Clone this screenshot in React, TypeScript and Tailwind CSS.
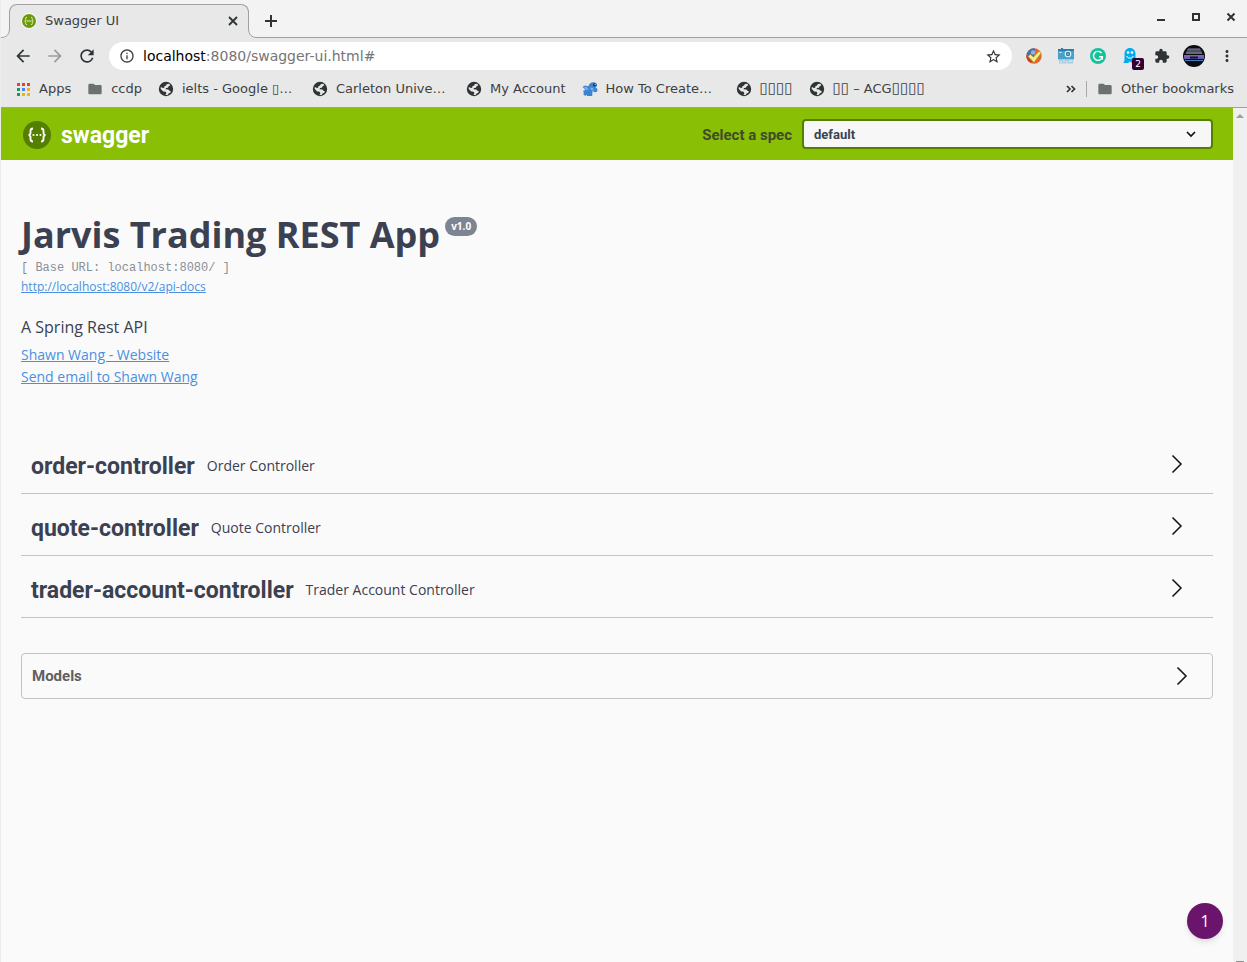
import React from "react";
import { MdArrowBack, MdArrowForward, MdRefresh, MdInfoOutline, MdStarBorder, MdExtension, MdMoreVert, MdFolder } from "react-icons/md";

const chromeFont = "font-['DejaVu_Sans',sans-serif]";
const titleFont = "font-[Roboto,sans-serif] font-bold";

function Globe() {
  return (
    <svg className="size-4 shrink-0" viewBox="0 0 16 16">
      <circle cx="8" cy="8" r="7.2" fill="#2f3437" />
      <path d="M8.600 3.200 11.300 2.800l1 1.400-1.700 1-.7 1.500-2 .4-.3 1.200 2.700.2 1.200 1.200 1.300.5-.5 1.600-1.700.7-1 1.500H7.400l1-1.700-.7-1.500-2.500-.4L2.600 7.800l.3-1.700 2 1 1.300-.3.2-1.600 1.800-.6z" fill="#e8e8e8" />
    </svg>
  );
}

function Folder() {
  return <MdFolder className="size-4 shrink-0 text-[#6b7171]" />;
}

function AppsGrid() {
  const colors = ["#db4437", "#db4437", "#db4437", "#0f9d58", "#4285f4", "#f4b400", "#0f9d58", "#f4b400", "#f4b400"];
  return (
    <svg className="size-4 shrink-0" viewBox="0 0 16 16">
      {colors.map((c, i) => (
        <rect key={i} x={2 + (i % 3) * 5} y={2 + Math.floor(i / 3) * 5} width="3" height="3" fill={c} />
      ))}
    </svg>
  );
}

function BirdIcon() {
  return (
    <svg className="size-4 shrink-0" viewBox="0 0 16 16">
      <path d="M.5 6 3 4.500l3.500.8C7 2.500 9 1.200 11.500 1.200c2 0 3.500 1 3.500 2.800 0 1.200-.7 2-1.700 2.500 1.400.3 2.200 1.300 2.200 2.500 0 1.500-1.200 2.300-2.700 2.200L10.500 10l-.3 5H5l-.3-1.500-1 1.300L1.500 14l.3-2.500L1 10l2.500-1.200z" fill="#3c83d3" />
      <path d="m2 6 2.500-.3L6.500 8l-2 1.500zM8 6.500l3 .5 1 2.500-3-.5z" fill="#79b0ec" />
      <circle cx="12.700" cy="3.700" r="1.700" fill="#163a72" />
      <circle cx="13.200" cy="3.200" r=".6" fill="#fff" />
    </svg>
  );
}

function Boxes({ children }: { children: string }) {
  return <span className="text-[15px] leading-4">{children}</span>;
}

type Mark = { id: string; label: React.ReactNode; icon: React.ReactNode; clipped?: boolean };
const marks: Mark[] = [
  { id: "apps", label: "Apps", icon: <AppsGrid /> },
  { id: "ccdp", label: "ccdp", icon: <Folder /> },
  { id: "ielts", label: "ielts - Google ▯…", icon: <Globe />, clipped: true },
  { id: "carleton", label: "Carleton Unive…", icon: <Globe />, clipped: true },
  { id: "account", label: "My Account", icon: <Globe /> },
  { id: "howto", label: "How To Create…", icon: <BirdIcon />, clipped: true },
  { id: "boxes", label: <Boxes>▯▯▯▯</Boxes>, icon: <Globe /> },
  { id: "acg", label: <><Boxes>▯▯</Boxes> – ACG<Boxes>▯▯▯▯</Boxes></>, icon: <Globe /> },
];

function TabStrip() {
  return (
    <div className="flex h-[38px] items-end">
      <svg className="relative z-10 -mr-px h-2.5 w-[9px] shrink-0" viewBox="0 0 9 10">
        <path d="M0 9.500C5 9.500 8.500 7 8.500 0H9V10H0z" fill="#e8e8e8" />
        <path d="M0 9.500C5 9.500 8.500 7 8.500 0" fill="none" stroke="#a0a0a0" />
      </svg>
      <div className="flex h-[34px] w-60 items-center rounded-t-lg border-x border-t border-[#a0a0a0] bg-[#e8e8e8] pr-2 pb-0.5 pl-[11px]">
        <svg className="size-4" viewBox="0 0 16 16">
          <circle cx="8" cy="8" r="7.800" fill="#fff" />
          <circle cx="8" cy="8" r="7" fill="#6a9a0c" />
          <path d="M6 4.300c-1.600 0-1.300 1-1.300 2S4.500 8 3.700 8c.8 0 1 .7 1 1.700s-.3 2 1.300 2M10 4.300c1.600 0 1.300 1 1.300 2s.2 1.700 1 1.700c-.8 0-1 .7-1 1.700s.3 2-1.300 2M5.500 8h5" fill="none" stroke="#e4efc5" />
        </svg>
        <span className="ml-2 flex-1 text-[13px] text-[#3c4043]">Swagger UI</span>
        <button aria-label="Close tab">
          <svg className="size-3.5" viewBox="0 0 14 14"><path d="m3 3 8 8m0-8-8 8" stroke="#2e3436" strokeWidth="1.800" /></svg>
        </button>
      </div>
      <svg className="relative z-10 -ml-px h-2.5 w-[9px] shrink-0" viewBox="0 0 9 10">
        <path d="M9 9.500C4 9.500 .5 7 .5 0H0V10H9z" fill="#e8e8e8" />
        <path d="M9 9.500C4 9.500 .5 7 .5 0" fill="none" stroke="#a0a0a0" />
      </svg>
      <div className="flex h-full flex-1 items-center justify-between border-b border-[#a0a0a0] pr-2 pl-1">
        <button aria-label="New tab" className="mt-1">
          <svg className="size-5" viewBox="0 0 20 20"><path d="M10 4v12M4 10h12" stroke="#2e3436" strokeWidth="2" /></svg>
        </button>
        <div className="flex items-center gap-[19px] pb-1">
          <button aria-label="Minimize"><svg className="size-4" viewBox="0 0 16 16"><path d="M4 11h8" stroke="#2e3436" strokeWidth="2" /></svg></button>
          <button aria-label="Maximize"><svg className="size-4" viewBox="0 0 16 16"><path d="M5 5h6v6H5z" fill="none" stroke="#2e3436" strokeWidth="2" /></svg></button>
          <button aria-label="Close window"><svg className="size-4" viewBox="0 0 16 16"><path d="m4.500 4.500 7 7m0-7-7 7" stroke="#2e3436" strokeWidth="2" /></svg></button>
        </div>
      </div>
    </div>
  );
}

function Toolbar() {
  return (
    <div className="flex h-9 items-center pr-[11px] pl-3 text-[#2e3436]">
      <div className="flex gap-3">
        <button aria-label="Back"><MdArrowBack className="size-5" /></button>
        <button aria-label="Forward" className="text-[#9a9c9d]"><MdArrowForward className="size-5" /></button>
        <button aria-label="Reload"><MdRefresh className="size-5" /></button>
      </div>
      <div className="ml-3 flex h-7 flex-1 items-center rounded-full bg-white pr-2.5 pl-2.5">
        <MdInfoOutline className="size-4 text-[#3c4043]" />
        <div className="ml-2 flex-1 text-sm text-[#757575]"><span className="text-black">localhost</span>:8080/swagger-ui.html#</div>
        <button aria-label="Bookmark this page"><MdStarBorder className="size-[17px]" /></button>
      </div>
      <div className="ml-3.5 flex items-center gap-4">
        <svg className="size-4" viewBox="0 0 16 16">
          <circle cx="8" cy="8" r="7.700" fill="#e8642c" />
          <path d="M9 .4A7.700 7.700 0 0 0 .4 8.500L8 9z" fill="#3f6fb5" />
          <path d="M.3 8A7.700 7.700 0 0 0 5 15L8 8z" fill="#c8402e" />
          <circle cx="7" cy="4.500" r="2.200" fill="#8db4e0" />
          <path d="M2 8.500 4.300 6.300 7.500 9l5.700-6 1.800 2.300L8 14.500z" fill="#f3f27a" stroke="#8d8a3a" strokeWidth=".6" />
        </svg>
        <svg className="size-4" viewBox="0 0 16 16">
          <path d="M0 1h3V0h2v1h11v10.500H0z" fill="#4a9fcb" />
          <path d="M0 1h3V0h2v1h11v2H0z" fill="#2b7fae" />
          <circle cx="10" cy="6" r="3.300" fill="#e5f5fc" />
          <circle cx="10" cy="6" r="2.200" fill="#217bb0" />
          <circle cx="10" cy="6" r=".8" fill="#d5effa" />
          <path d="M1.500 4.500h2" stroke="#e5f5fc" />
          <path d="M1 11.500h14v4H1z" fill="#a8cde0" />
          <path d="M2 14h2m1-1h2m1 1h2m1-1h3" stroke="#e4f1f7" />
        </svg>
        <svg className="size-4" viewBox="0 0 16 16">
          <circle cx="8" cy="8" r="8" fill="#15c39a" />
          <path d="M11.600 5.200A4.500 4.500 0 1 0 12.400 8.800H9M12.300 8.800v2.700" fill="none" stroke="#fff" strokeWidth="1.400" />
        </svg>
        <div className="relative size-4">
          <svg className="size-4" viewBox="0 0 16 16">
            <path d="M2.500 6C2.500 2.500 4.700 0 8 0s5.500 2.500 5.500 6v9l-2-1.500L10 15l-2-1.500L6 15H1c1.200-1 1.500-2.500 1.500-4z" fill="#00aef0" />
            <circle cx="6" cy="4.500" r="1.300" fill="#fff" /><circle cx="10" cy="4.500" r="1.300" fill="#fff" />
            <path d="M4.700 8c.8 2.800 5.800 2.800 6.600 0" fill="none" stroke="#fff" />
          </svg>
          <span className="absolute top-2.5 left-2.5 flex h-3 w-3 items-center justify-center rounded-[2px] bg-[#330033] text-[9px] leading-3 text-white">2</span>
        </div>
        <MdExtension className="size-4" />
        <svg className="-mx-[3px] size-[22px]" viewBox="0 0 22 22">
          <circle cx="11" cy="11" r="11" fill="#0d0b12" />
          <path d="M4.500 4h13l2 5h-17z" fill="#46545f" />
          <path d="M5 4h12M3 8h16" stroke="#8a7f9f" />
          <path d="M1 10h20v4H1z" fill="#5c5fa8" />
          <path d="M1 11h20" stroke="#9a6cc0" />
          <path d="M7 11.500h8v2H7z" fill="#15152a" />
          <path d="M2 15.500h18" stroke="#3c82c4" />
        </svg>
        <button aria-label="Menu"><MdMoreVert className="size-[18px]" /></button>
      </div>
    </div>
  );
}

function BookmarkBar() {
  return (
    <div className="flex h-[34px] items-center gap-4 border-b border-[#a0a0a0] pr-[13px] pb-1 pl-3.5 text-[13px] text-[#3c4043]">
      {marks.map((m) => (
        <a key={m.id} href="#" className="flex items-center gap-2 whitespace-nowrap">
          {m.icon}
          <span className={m.clipped ? "w-[114px]" : ""}>{m.label}</span>
        </a>
      ))}
      <div className="ml-auto flex items-center gap-2.5">
        <button aria-label="More bookmarks">
          <svg className="size-2.5" viewBox="0 0 10 10"><path d="m1 2 3 3-3 3m4.500-6 3 3-3 3" fill="none" stroke="#2e3436" strokeWidth="1.700" /></svg>
        </button>
        <div className="h-4 w-px bg-[#a8a8a8]" />
        <a href="#" className="flex items-center gap-2 whitespace-nowrap"><Folder />Other bookmarks</a>
      </div>
    </div>
  );
}

function Arrow() {
  return (
    <svg className="h-5 w-3" viewBox="0 0 12 20">
      <path d="m1.500 1.500 8.500 8.500-8.500 8.500" fill="none" stroke="#111" strokeWidth="1.500" />
    </svg>
  );
}

function Topbar() {
  return (
    <header className="flex h-[52px] items-center justify-between bg-[#89bf04] px-5">
      <a href="#" className="flex items-center gap-2.5 pt-0.5 text-white">
        <svg className="size-[30px]" viewBox="0 0 30 30">
          <circle cx="16" cy="15" r="14" fill="#547f00" />
          <path d="M12 8.500c-2.200 0-2.500.8-2.500 2.500s.3 4-2 4c2.300 0 2 2.300 2 4s.3 2.500 2.500 2.500M20 8.500c2.200 0 2.500.8 2.500 2.500s-.3 4 2 4c-2.300 0-2 2.300-2 4s-.3 2.500-2.500 2.500" fill="none" stroke="#fff" strokeWidth="1.900" />
          <circle cx="12.500" cy="15" r="1.100" fill="#fff" /><circle cx="16" cy="15" r="1.100" fill="#fff" /><circle cx="19.500" cy="15" r="1.100" fill="#fff" />
        </svg>
        <span className={`${titleFont} pt-0.5 text-[23px] leading-7`}>swagger</span>
      </a>
      <div className="flex items-center gap-2.5">
        <label htmlFor="spec" className={`${titleFont} pt-0.5 text-[15px] text-[#3f4b2c]`}>Select a spec</label>
        <div className="relative">
          <select id="spec" className={`${titleFont} h-[30px] w-[411px] appearance-none rounded border-2 border-[#547f00] bg-[#f7f7f7] px-2.5 pt-0.5 text-[13px] text-[#3b4151]`}>
            <option>default</option>
          </select>
          <svg className="pointer-events-none absolute top-2.5 right-4 h-2.5 w-3" viewBox="0 0 12 10">
            <path d="m2 3 4 4 4-4" fill="none" stroke="#111" strokeWidth="1.700" />
          </svg>
        </div>
      </div>
    </header>
  );
}

const tags = [
  ["order-controller", "Order Controller"],
  ["quote-controller", "Quote Controller"],
  ["trader-account-controller", "Trader Account Controller"],
];

function Docs() {
  return (
    <main className="px-5 font-['Open_Sans',sans-serif] text-[#3b4151]">
      <section className="pt-[50px]">
        <h1 className="flex items-start gap-[5px] text-4xl leading-[49px] font-bold">
          Jarvis Trading REST App
          <small className="mt-[7px] rounded-full bg-[#7d8492] px-1.5 text-[10px] leading-[19px] text-white">v1.0</small>
        </h1>
        <pre className="font-['Liberation_Mono',monospace] text-xs leading-[18px] text-[#8c8f96]">[ Base URL: localhost:8080/ ]</pre>
        <a href="#" className="mt-0.5 block text-xs leading-4 text-[#4990e2] underline">http://localhost:8080/v2/api-docs</a>
        <p className="mt-5 text-base leading-6">A Spring Rest API</p>
        <div className="mt-[5px] flex flex-col items-start text-sm leading-[22px] text-[#4990e2] underline">
          <a href="#">Shawn Wang - Website</a>
          <a href="#">Send email to Shawn Wang</a>
        </div>
      </section>
      <section className="mt-[49px] flex flex-col gap-[5px]">
        {tags.map(([name, text]) => (
          <div key={name} className="flex h-[57px] items-center gap-3 border-b border-[#c1c3c8] pr-[30px] pl-2.5">
            <h2 className={`${titleFont} pt-1 text-[23px] leading-7`}>{name}</h2>
            <span className="flex-1 pt-0.5 text-sm">{text}</span>
            <button aria-label={`Expand ${name}`} className="pb-0.5"><Arrow /></button>
          </div>
        ))}
      </section>
      <section className="mt-[35px] flex h-[46px] items-center justify-between rounded border border-[#c1c3c8] pr-6 pl-2.5">
        <h2 className={`${titleFont} text-[15px] text-[#606060]`}>Models</h2>
        <button aria-label="Expand models"><Arrow /></button>
      </section>
    </main>
  );
}

export default function App() {
  return (
    <div className="flex min-h-screen flex-col border-l border-[#ececec] bg-[#fafafa]">
      <div className={`${chromeFont} bg-[#e8e8e8]`}>
        <div className="bg-[#f3f3f3]"><TabStrip /></div>
        <Toolbar />
        <BookmarkBar />
      </div>
      <div className="relative flex flex-1">
        <div className="flex-1">
          <Topbar />
          <Docs />
        </div>
        <div className="flex w-3.5 flex-col items-center justify-between bg-[#f0f0f0] pt-1.5">
          <svg className="h-1 w-2" viewBox="0 0 8 4"><path d="M0 4 4 0l4 4z" fill="#a0a0a0" /></svg>
          <div className="h-px w-2 bg-[#909090]" />
        </div>
        <button className="absolute right-6 bottom-[23px] flex size-9 items-center justify-center rounded-full bg-[#6b146b] font-['Open_Sans',sans-serif] text-base text-white shadow-md">1</button>
      </div>
    </div>
  );
}
